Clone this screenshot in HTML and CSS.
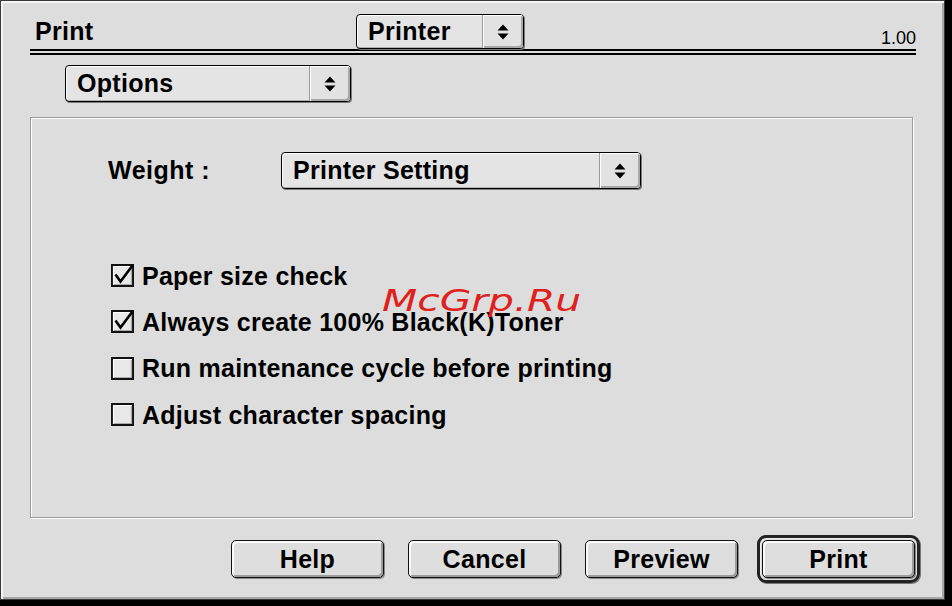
FILE: index.html
```html
<!DOCTYPE html>
<html>
<head>
<meta charset="utf-8">
<link rel="stylesheet" href="styles.css">
</head>
<body>
<div class="window">
  <div class="header">
    <div class="title">Print</div>
    <div class="popup popup-printer">
      <span class="popup-label">Printer</span>
      <span class="popup-arrows"><svg width="12" height="16" viewBox="0 0 12 16"><polygon points="0.5,6.5 6,0.5 11.5,6.5" fill="#000"/><polygon points="0.5,9.5 6,15.5 11.5,9.5" fill="#000"/></svg></span>
    </div>
    <div class="version">1.00</div>
  </div>
  <div class="rule"></div>
  <div class="popup popup-options">
    <span class="popup-label">Options</span>
    <span class="popup-arrows"><svg width="12" height="16" viewBox="0 0 12 16"><polygon points="0.5,6.5 6,0.5 11.5,6.5" fill="#000"/><polygon points="0.5,9.5 6,15.5 11.5,9.5" fill="#000"/></svg></span>
  </div>
  <div class="group">
    <div class="weight-row">
      <span class="label">Weight :</span>
      <div class="popup popup-weight">
        <span class="popup-label">Printer Setting</span>
        <span class="popup-arrows"><svg width="12" height="16" viewBox="0 0 12 16"><polygon points="0.5,6.5 6,0.5 11.5,6.5" fill="#000"/><polygon points="0.5,9.5 6,15.5 11.5,9.5" fill="#000"/></svg></span>
      </div>
    </div>
    <div class="checks">
      <div class="check-row">
        <svg class="checkbox" width="24" height="24" viewBox="0 0 24 24"><rect x="1" y="1" width="21" height="21" fill="#e8e8e8" stroke="#111" stroke-width="2"/><polyline points="2.5,21 2.5,2.5 21,2.5" fill="none" stroke="#fff" stroke-width="1.2"/><polyline points="3,20.5 20.5,20.5 20.5,3" fill="none" stroke="#aaa" stroke-width="1.2"/><polyline points="4.5,10.5 9.5,17.5 21.5,1.5" fill="none" stroke="#000" stroke-width="2.6"/></svg>
        <span>Paper size check</span>
      </div>
      <div class="check-row">
        <svg class="checkbox" width="24" height="24" viewBox="0 0 24 24"><rect x="1" y="1" width="21" height="21" fill="#e8e8e8" stroke="#111" stroke-width="2"/><polyline points="2.5,21 2.5,2.5 21,2.5" fill="none" stroke="#fff" stroke-width="1.2"/><polyline points="3,20.5 20.5,20.5 20.5,3" fill="none" stroke="#aaa" stroke-width="1.2"/><polyline points="4.5,10.5 9.5,17.5 21.5,1.5" fill="none" stroke="#000" stroke-width="2.6"/></svg>
        <span>Always create 100% Black(K)Toner</span>
      </div>
      <div class="check-row">
        <svg class="checkbox" width="24" height="24" viewBox="0 0 24 24"><rect x="1" y="1" width="21" height="21" fill="#e8e8e8" stroke="#111" stroke-width="2"/><polyline points="2.5,21 2.5,2.5 21,2.5" fill="none" stroke="#fff" stroke-width="1.2"/><polyline points="3,20.5 20.5,20.5 20.5,3" fill="none" stroke="#aaa" stroke-width="1.2"/></svg>
        <span>Run maintenance cycle before printing</span>
      </div>
      <div class="check-row">
        <svg class="checkbox" width="24" height="24" viewBox="0 0 24 24"><rect x="1" y="1" width="21" height="21" fill="#e8e8e8" stroke="#111" stroke-width="2"/><polyline points="2.5,21 2.5,2.5 21,2.5" fill="none" stroke="#fff" stroke-width="1.2"/><polyline points="3,20.5 20.5,20.5 20.5,3" fill="none" stroke="#aaa" stroke-width="1.2"/></svg>
        <span>Adjust character spacing</span>
      </div>
    </div>
  </div>
  <div class="buttons">
    <div class="button">Help</div>
    <div class="button">Cancel</div>
    <div class="button">Preview</div>
    <div class="default-ring"><div class="button">Print</div></div>
  </div>
  <div class="watermark">McGrp.Ru</div>
</div>
</body>
</html>
```

FILE: styles.css
```css
html, body {
  margin: 0;
  padding: 0;
}
body {
  background: #000;
  font-family: "Liberation Sans", Arial, sans-serif;
  color: #000;
  width: 952px;
  height: 606px;
  overflow: hidden;
}
.window {
  position: relative;
  width: 945px;
  height: 600px;
  box-sizing: border-box;
  background: #dddddd;
  border: 1px solid #3a3a3a;
  box-shadow: inset 2px 2px 0 #f4f4f4, inset -2px -2px 0 #a6a6a6;
  padding: 13px 0 0 29px;
}
.header {
  display: grid;
  grid-template-columns: 326px 168px 1fr;
  width: 886px;
  align-items: end;
}
.title {
  font-size: 25px;
  font-weight: bold;
  line-height: 25px;
  padding-left: 5px;
  margin-bottom: 5px;
  letter-spacing: 0.3px;
}
.version {
  font-size: 18px;
  line-height: 18px;
  text-align: right;
  margin-bottom: 2px;
}
.rule {
  width: 886px;
  height: 2px;
  border-top: 2px solid #000;
  border-bottom: 2px solid #000;
}
.popup {
  display: flex;
  box-sizing: border-box;
  border: 1px solid #000;
  border-radius: 4px;
  background: #e4e4e4;
  box-shadow: 1px 1px 0 #7a7a7a, inset 1px 1px 0 #fff, inset -1px -1px 0 #b0b0b0;
  font-size: 25px;
  font-weight: bold;
  letter-spacing: 0.3px;
}
.popup-label {
  flex: 1;
  display: flex;
  align-items: center;
  padding-left: 11px;
}
.popup-arrows {
  width: 40px;
  display: flex;
  align-items: center;
  justify-content: center;
  border-left: 1px solid #9a9a9a;
  border-radius: 0 3px 3px 0;
  background: #e2e2e2;
  box-shadow: inset 1px 1px 0 #fff, inset -2px -2px 0 #a8a8a8;
}
.popup-printer {
  height: 35px;
}
.popup-options {
  margin-top: 10px;
  margin-left: 35px;
  width: 286px;
  height: 37px;
}
.group {
  margin-top: 15px;
  width: 883px;
  height: 401px;
  box-sizing: border-box;
  border: 1px solid #9a9a9a;
  box-shadow: 1px 1px 0 #fff, inset 1px 1px 0 #fff;
  padding: 34px 0 0 77px;
}
.weight-row {
  display: flex;
  align-items: center;
}
.label {
  width: 173px;
  font-size: 25px;
  font-weight: bold;
  letter-spacing: 0.5px;
}
.popup-weight {
  width: 360px;
  height: 37px;
}
.checks {
  margin-top: 64px;
  display: flex;
  flex-direction: column;
}
.check-row {
  height: 46.3px;
  display: flex;
  align-items: center;
  font-size: 25px;
  font-weight: bold;
  letter-spacing: 0.25px;
  white-space: nowrap;
}
.checkbox {
  margin-left: 3px;
  margin-right: 7px;
  flex: none;
}
.buttons {
  margin-top: 17px;
  display: flex;
  align-items: center;
  gap: 24px;
  padding-left: 201px;
}
.button {
  width: 153px;
  height: 38px;
  box-sizing: border-box;
  border: 1px solid #111;
  border-radius: 5px;
  background: #dedede;
  box-shadow: inset 2px 2px 0 #fafafa, inset -2px -2px 0 #9c9c9c, 1px 1px 0 #888;
  display: flex;
  align-items: center;
  justify-content: center;
  font-size: 25px;
  font-weight: bold;
  letter-spacing: 0.3px;
}
.default-ring {
  margin-left: -5px;
  border: 3px solid #222;
  border-radius: 9px;
  padding: 2px;
  box-shadow: inset 1px 1px 0 #eee, 1px 1px 0 #777;
}
.watermark {
  position: absolute;
  left: 381px;
  top: 285px;
  font-family: "DejaVu Sans", sans-serif;
  font-style: italic;
  font-size: 30px;
  line-height: 30px;
  color: #e0201c;
  transform: scaleX(1.36);
  transform-origin: left top;
  white-space: nowrap;
}
```
